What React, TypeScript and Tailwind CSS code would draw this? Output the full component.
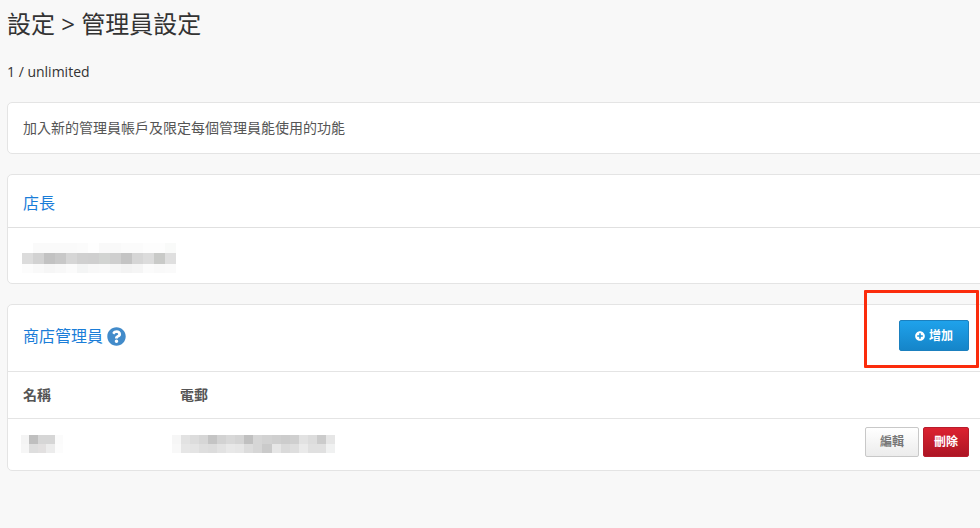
// App.tsx
import { ReactNode } from "react";
import { FaPlusCircle, FaQuestionCircle } from "react-icons/fa";

const ownerBlur = [
  ["#ffffff", "#fafafa", "#fafafa", "#fafafa", "#fafafa", "#fbfbfb", "#fefefe", "#f9f9f9", "#f9f9f9", "#fbfbfb", "#fbfbfb", "#fdfdfd", "#fdfdfd", "#f9faf9"],
  ["#dcdcdc", "#d2d2d2", "#c2c2c2", "#c8c8c8", "#d6d6d6", "#d0d0d0", "#cfcfcf", "#d2d4d2", "#cfcfcf", "#c4c4c4", "#d6d6d6", "#dcdcdc", "#c9cac8", "#dfdfdf"],
  ["#fcfcfc", "#f9f9f9", "#f6f6f6", "#f8f8f8", "#fbfbfb", "#f4f5f5", "#f8f8f8", "#f9f9f9", "#f6f6f6", "#f3f3f3", "#f5f5f5", "#fbfbfb", "#f9f9f9", "#fafafa"],
];

const nameBlur = [
  ["#f4f4f4", "#bfbfbf", "#d6d6d6", "#d6d6d6", "#fbfbfb"],
  ["#f6f6f6", "#dedede", "#e2e0e0", "#ececec", "#fcfcfc"],
];

const mailBlur = [
  ["#f6f6f6", "#e2e2e2", "#dcdcdc", "#d6d6d6", "#c4c4c4", "#d2d2d2", "#d8d8d8", "#d4d4d4", "#c0c0c0", "#d6d6d6", "#d2d2d2", "#cfcfcf", "#cccccc", "#cfcfcf", "#e2e2e2", "#dcdcdc", "#cbcbcb", "#e6e6e6"],
  ["#f8f8f8", "#e6e6e6", "#e4e4e4", "#dedede", "#dcdcdc", "#e2e2e2", "#e8e8e8", "#e6e6e6", "#dcdcdc", "#d6d6d6", "#cacaca", "#e6e6e6", "#dadada", "#dedede", "#eaeaea", "#e0e0e0", "#e0e0e0", "#f0f1f1"],
];

// 打碼的區塊，資料是每一格的顏色
function Blur({ rows, cell, heights }: { rows: string[][]; cell: number; heights: number[] }) {
  return (
    <div className="flex flex-col">
      {rows.map((row, i) => (
        <div key={i} className="flex">
          {row.map((c, j) => (
            <div key={j} style={{ backgroundColor: c, width: cell, height: heights[i] }} />
          ))}
        </div>
      ))}
    </div>
  );
}

function Card({ children, className = "" }: { children: ReactNode; className?: string }) {
  return (
    <div className={`bg-white border border-[#e4e4e4] rounded-[5px] ${className}`}>{children}</div>
  );
}

export default function App() {
  return (
    <div className="relative h-[528px] w-[980px] overflow-hidden bg-[#f8f8f8] font-['Open_Sans','Noto_Sans_CJK_TC',sans-serif] text-[#333]">
      <div className="w-[990px] pl-[7px]">
        <h1 className="pt-[8px] text-[24px] leading-[32px] font-normal text-[#333]">設定 &gt; 管理員設定</h1>
        <p className="mt-[22px] text-[14px] leading-[20px]">1 / unlimited</p>

        <Card className="mt-[20px] h-[52px] flex items-center px-[15px] pb-[2px]">
          <p className="text-[14px] text-[#555]">加入新的管理員帳戶及限定每個管理員能使用的功能</p>
        </Card>

        <Card className="mt-[20px] h-[110px]">
          <div className="h-[53px] flex items-center px-[15px] pt-[3px] border-b border-[#e0e0e0]">
            <h2 className="text-[16px] text-[#1a7dd8]">店長</h2>
          </div>
          <div className="pl-[14px] pt-[15px]">
            <Blur rows={ownerBlur} cell={11} heights={[10, 11, 9]} />
          </div>
        </Card>

        <Card className="mt-[20px] h-[167px]">
          <div className="h-[67px] flex items-center justify-between pl-[15px] pr-[20px] border-b border-[#e4e4e4]">
            <div className="flex items-center gap-[4px] pb-[4px]">
              <h2 className="text-[16px] text-[#1a7dd8]">商店管理員</h2>
              <FaQuestionCircle className="text-[19px] text-[#428bca]" />
            </div>
            <button className="h-[31px] w-[70px] mb-[5px] flex items-center justify-center gap-[4px] rounded-[2px] border border-[#1b80bf] bg-gradient-to-b from-[#1fa2eb] to-[#1585c9] text-[12px] font-bold text-white">
              <FaPlusCircle className="text-[10px]" />
              增加
            </button>
          </div>
          <div className="h-[47px] flex items-center px-[15px] pb-[2px] border-b border-[#e4e4e4] text-[14px] font-bold text-[#555]">
            <div className="w-[157px]">名稱</div>
            <div>電郵</div>
          </div>
          <div className="h-[51px] flex items-center justify-between pl-[13px] pr-[20px] pb-[2px]">
            <div className="flex items-center">
              <div className="w-[151px]">
                <Blur rows={nameBlur} cell={8.4} heights={[9, 9]} />
              </div>
              <Blur rows={mailBlur} cell={9.05} heights={[9, 9]} />
            </div>
            <div className="flex gap-[4px] mb-[4px]">
              <button className="h-[30px] w-[54px] rounded-[2px] border border-[#c8c8c8] bg-gradient-to-b from-[#ffffff] to-[#ececec] text-[12px] font-bold text-[#777]">編輯</button>
              <button className="h-[30px] w-[46px] rounded-[2px] border border-[#b81c2c] bg-gradient-to-b from-[#dc2230] to-[#ad1524] text-[12px] font-bold text-white">刪除</button>
            </div>
          </div>
        </Card>
      </div>
      <div className="absolute left-[864px] top-[290px] h-[78px] w-[115px] rounded-[1px] border-[3px] border-[#fb2c0c]" />
    </div>
  );
}
